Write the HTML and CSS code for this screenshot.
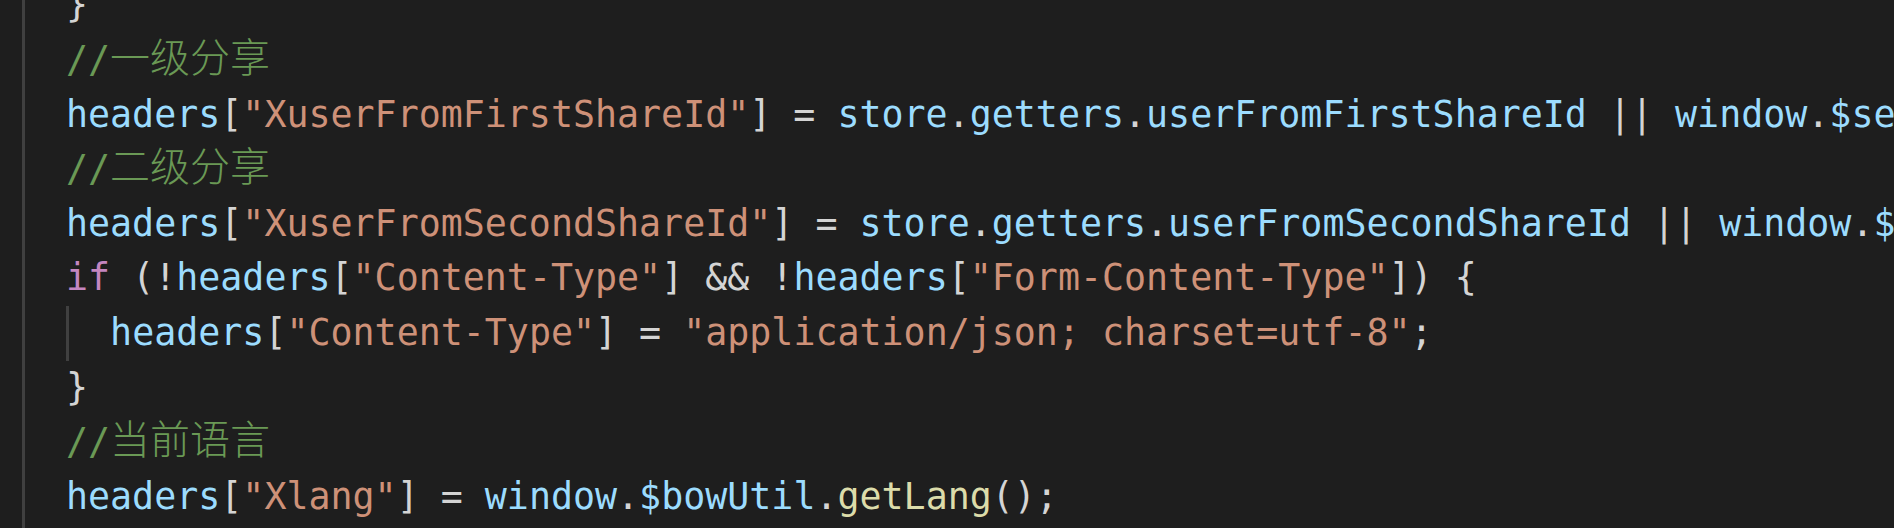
FILE: index.html
```html
<!DOCTYPE html>
<html lang="zh">
<head>
<meta charset="utf-8">
<title>editor</title>
<link rel="stylesheet" href="styles.css">
</head>
<body>
<div class="editor">
  <div class="gutter"></div>
  <div class="code">
    <div class="line"><span class="p">}</span></div>
    <div class="line"><span class="c">//<span class="cjk">一级分享</span></span></div>
    <div class="line"><span class="v">headers</span><span class="p">[</span><span class="s">"XuserFromFirstShareId"</span><span class="p">] = </span><span class="v">store</span><span class="p">.</span><span class="v">getters</span><span class="p">.</span><span class="v">userFromFirstShareId</span><span class="p"> || </span><span class="v">window</span><span class="p">.</span><span class="v">$se</span></div>
    <div class="line"><span class="c">//<span class="cjk">二级分享</span></span></div>
    <div class="line"><span class="v">headers</span><span class="p">[</span><span class="s">"XuserFromSecondShareId"</span><span class="p">] = </span><span class="v">store</span><span class="p">.</span><span class="v">getters</span><span class="p">.</span><span class="v">userFromSecondShareId</span><span class="p"> || </span><span class="v">window</span><span class="p">.</span><span class="v">$</span></div>
    <div class="line"><span class="k">if</span><span class="p"> (!</span><span class="v">headers</span><span class="p">[</span><span class="s">"Content-Type"</span><span class="p">] &amp;&amp; !</span><span class="v">headers</span><span class="p">[</span><span class="s">"Form-Content-Type"</span><span class="p">]) {</span></div>
    <div class="line"><span class="indent"></span><span class="v">headers</span><span class="p">[</span><span class="s">"Content-Type"</span><span class="p">] = </span><span class="s">"application/json; charset=utf-8"</span><span class="p">;</span></div>
    <div class="line"><span class="p">}</span></div>
    <div class="line"><span class="c">//<span class="cjk">当前语言</span></span></div>
    <div class="line"><span class="v">headers</span><span class="p">[</span><span class="s">"Xlang"</span><span class="p">] = </span><span class="v">window</span><span class="p">.</span><span class="v">$bowUtil</span><span class="p">.</span><span class="f">getLang</span><span class="p">();</span></div>
  </div>
</div>
</body>
</html>
```

FILE: styles.css
```css
html, body {
  margin: 0;
  padding: 0;
  background: #1e1e1e;
  overflow: hidden;
}

.editor {
  display: flex;
  width: 1894px;
  height: 528px;
  overflow: hidden;
  background: #1e1e1e;
}

.gutter {
  flex: 0 0 22px;
  border-right: 3px solid #404040;
}

.code {
  flex: 1;
  min-width: 0;
  padding-left: 41px;
  margin-top: -21.6px;
  font-family: "DejaVu Sans Mono", "Noto Sans CJK SC", monospace;
  font-size: 36.62px;
  line-height: 54.6px;
  color: #d4d4d4;
}

.line {
  height: 54.6px;
  white-space: pre;
}

.indent {
  display: inline-block;
  box-sizing: border-box;
  width: 44.1px;
  height: 54.6px;
  vertical-align: top;
  border-left: 3px solid #404040;
}

.cjk {
  font-family: "Noto Sans CJK SC", sans-serif;
  font-size: 40px;
  line-height: 40px;
  font-weight: 300;
}

.p { color: #d4d4d4; }
.v { color: #9cdcfe; }
.s { color: #ce9178; }
.c { color: #6a9955; }
.k { color: #c586c0; }
.f { color: #dcdcaa; }
```
